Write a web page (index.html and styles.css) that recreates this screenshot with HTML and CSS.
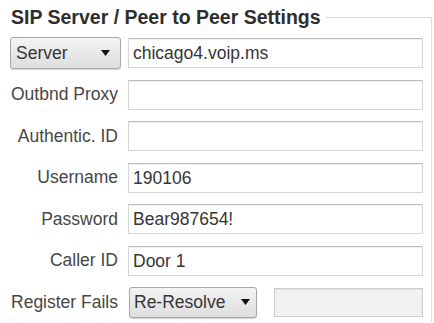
FILE: index.html
```html
<!DOCTYPE html>
<html>
<head>
<meta charset="utf-8">
<link rel="stylesheet" href="styles.css">
</head>
<body>
<fieldset class="box">
  <legend class="title">SIP Server / Peer to Peer Settings</legend>
  <div class="form">
    <div class="select select-mode"><span>Server</span><svg class="caret" width="9" height="6" viewBox="0 0 9 6"><path d="M0 0H9L4.5 6Z" fill="#111"/></svg></div>
    <div class="field">chicago4.voip.ms</div>

    <div class="label">Outbnd Proxy</div>
    <div class="field"></div>

    <div class="label">Authentic. ID</div>
    <div class="field"></div>

    <div class="label">Username</div>
    <div class="field">190106</div>

    <div class="label">Password</div>
    <div class="field">Bear987654!</div>

    <div class="label">Caller ID</div>
    <div class="field">Door 1</div>

    <div class="label">Register Fails</div>
    <div class="pair">
      <div class="select select-fail"><span>Re-Resolve</span><svg class="caret" width="9" height="6" viewBox="0 0 9 6"><path d="M0 0H9L4.5 6Z" fill="#111"/></svg></div>
      <div class="field field-disabled"></div>
    </div>
  </div>
</fieldset>
</body>
</html>
```

FILE: styles.css
```css
html, body {
  margin: 0;
  padding: 0;
  background: #ffffff;
}

body {
  font-family: "Liberation Sans", Arial, sans-serif;
  width: 434px;
  height: 323px;
  overflow: hidden;
}

.box {
  margin: 7px 2px 0 0;
  padding: 0 8px 5px 0;
  border: 0;
  border-top: 1px solid #dedede;
  border-right: 1px solid #dedede;
  min-width: 0;
}

.title {
  padding: 0 5px 0 11px;
  margin: 0;
  font-size: 19.5px;
  line-height: 20px;
  font-weight: bold;
  color: #2e2e2e;
}

.form {
  margin: 11px 0 0 8px;
  display: grid;
  grid-template-columns: 113px 1fr;
  grid-auto-rows: 30px;
  column-gap: 7px;
  row-gap: 11.5px;
  align-items: center;
}

.label {
  text-align: right;
  padding-right: 3px;
  font-size: 17.5px;
  color: #474747;
  white-space: nowrap;
}

.field {
  box-sizing: border-box;
  height: 30px;
  border: 1px solid #d6d6d6;
  border-top-color: #bcbcbc;
  box-shadow: inset 0 1px 1px rgba(0, 0, 0, 0.06);
  background: #ffffff;
  padding: 0 4px;
  font-size: 17.5px;
  line-height: 28px;
  color: #363636;
  white-space: nowrap;
}

.field-disabled {
  background: #f1f1f1;
  border-color: #cdcdcd;
  height: 29px;
}

.select {
  box-sizing: border-box;
  height: 32px;
  display: flex;
  align-items: center;
  justify-content: space-between;
  border: 1px solid #a8a8a8;
  border-radius: 3px;
  background: linear-gradient(#f3f3f3, #dedede);
  box-shadow: 0 1px 1px rgba(0, 0, 0, 0.18);
  font-size: 17.5px;
  color: #363636;
  white-space: nowrap;
}

.select-mode {
  margin-left: 2px;
  padding: 0 10px 0 5px;
}

.select-fail {
  width: 128px;
  flex: none;
  padding: 0 6px 0 4px;
  height: 31px;
}

.caret {
  display: block;
  flex: none;
}

.pair {
  display: flex;
  align-items: center;
  gap: 17px;
  margin-left: 1px;
}

.pair .field {
  flex: 1;
}
```
